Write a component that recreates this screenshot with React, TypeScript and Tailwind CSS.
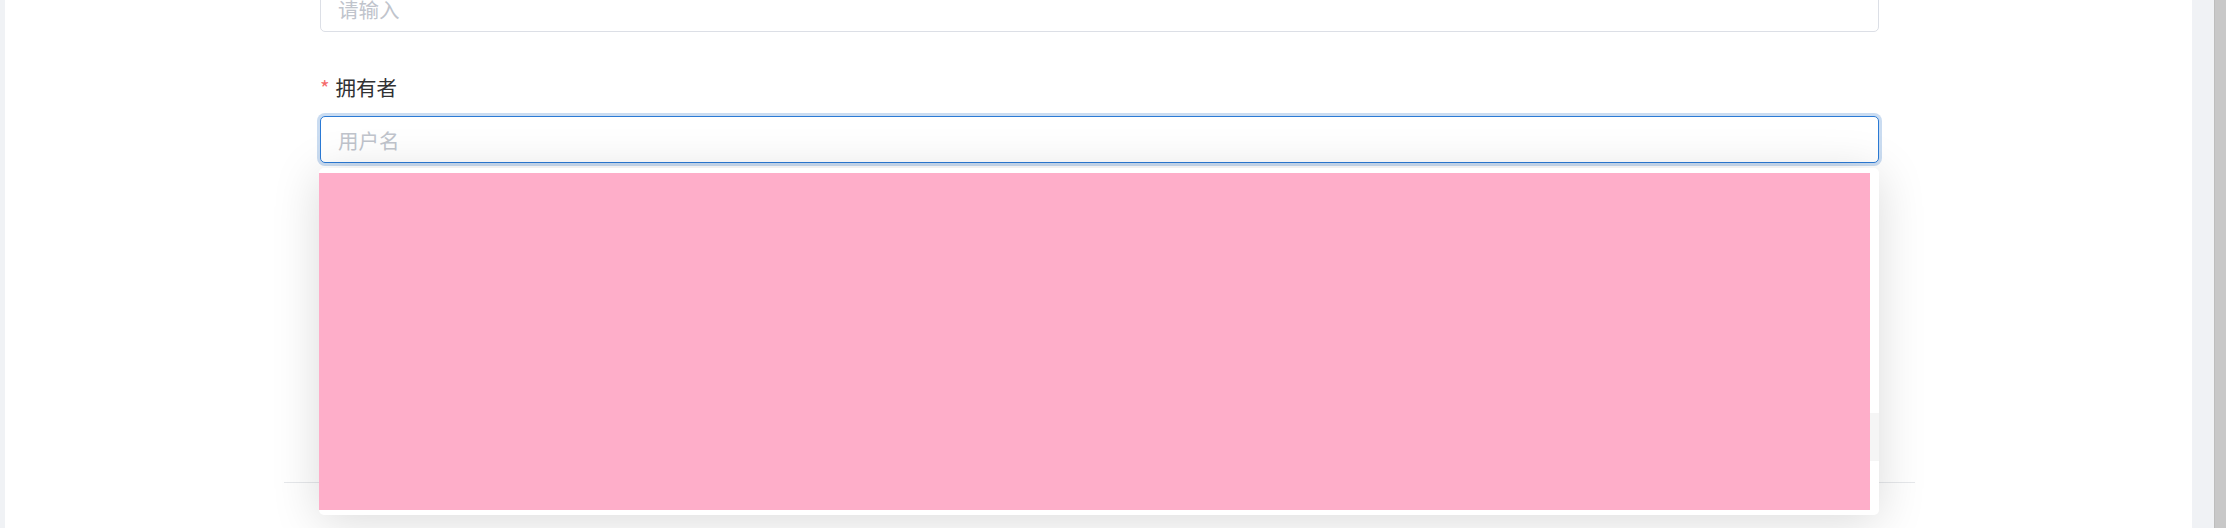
import React from "react";

const font = "font-['Noto_Sans_CJK_SC','Noto_Sans',sans-serif]";

function FieldLabel({ text, required = true }: { text: string; required?: boolean }) {
  return (
    <div className="flex h-[46px] items-center text-[20.5px] leading-none text-[#303133]">
      {required && <span className="mr-[6px] text-[#f56c6c]">*</span>}
      <span>{text}</span>
    </div>
  );
}

export default function App() {
  return (
    <div className={`flex h-[528px] w-full overflow-hidden bg-white ${font}`}>
      <div className="w-[5px] shrink-0 bg-[#f0f2f5]" />

      <main className="relative flex-1 bg-white">
        <div className="-mt-[14px] ml-[315px] w-[1559px]">
          <input
            readOnly
            placeholder="请输入"
            className="box-border h-[46px] w-full rounded-[5px] border border-[#dcdfe6] bg-white px-[17px] text-[20.5px] text-[#606266] outline-none placeholder:text-[#c0c4cc]"
          />

          <div className="mt-[32px]">
            <FieldLabel text="拥有者" />
          </div>

          <input
            readOnly
            placeholder="用户名"
            className="mt-[6px] box-border h-[47px] w-full rounded-[5px] border border-[#2b7ad5] bg-white px-[17px] text-[20.5px] text-[#606266] shadow-[0_0_0_3px_#cadcf1] outline-none placeholder:text-[#c0c4cc]"
          />
        </div>

        <div className="ml-[279px] mt-[319px] h-px w-[1631px] bg-[#e6e8eb]" />

        <div className="ml-[315px] mt-[33px]">
          <FieldLabel text="所属项目" />
        </div>

        {/* dropdown popper */}
        <div className="absolute left-[314px] top-[168px] z-10 box-border flex h-[347px] w-[1560px] rounded-[5px] bg-white pb-[5px] pt-[5px] shadow-[0_6px_48px_rgba(0,0,0,0.15)]">
          <div className="h-full w-[1551px] bg-[#feaec9]" />
          <div className="flex flex-1 flex-col">
            <div className="h-[240px]" />
            <div className="h-[48px] bg-[#f5f5f5]" />
          </div>
        </div>
      </main>

      <div className="w-[22px] shrink-0 bg-[#f0f2f5]" />
      <div className="w-[12px] shrink-0 border-l border-[#bdbdbd] bg-[#c8c8c8]" />
    </div>
  );
}
